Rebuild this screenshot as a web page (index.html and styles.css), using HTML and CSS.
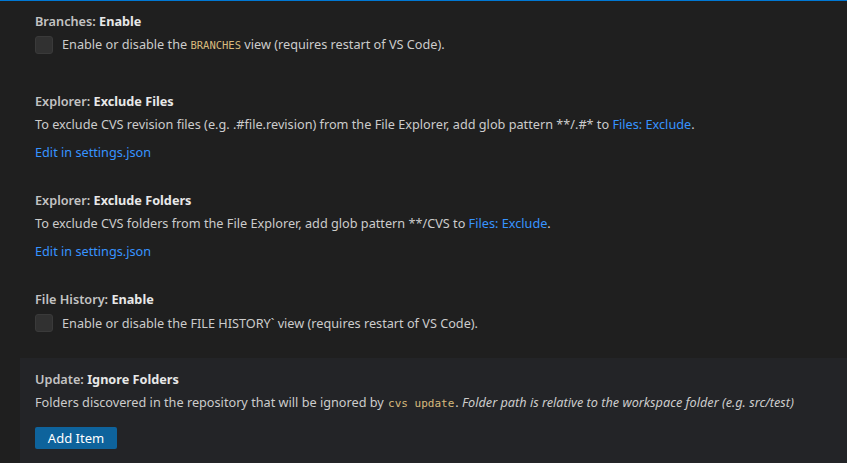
FILE: index.html
```html
<!DOCTYPE html>
<html>
<head>
<meta charset="utf-8">
<link rel="stylesheet" href="styles.css">
</head>
<body>
<div class="topline"></div>
<div class="list">
  <div class="item bool">
    <div class="title"><span class="cat">Branches: </span><span class="label">Enable</span></div>
    <div class="boolrow">
      <span class="checkbox"></span>
      <span class="desc">Enable or disable the <code class="kw">BRANCHES</code> view (requires restart of VS Code).</span>
    </div>
  </div>
  <div class="item link">
    <div class="title"><span class="cat">Explorer: </span><span class="label">Exclude Files</span></div>
    <div class="desc">To exclude CVS revision files (e.g. .#file.revision) from the File Explorer, add glob pattern **/.#* to <a class="a">Files: Exclude</a>.</div>
    <div class="edit"><a class="a">Edit in settings.json</a></div>
  </div>
  <div class="item link">
    <div class="title"><span class="cat">Explorer: </span><span class="label">Exclude Folders</span></div>
    <div class="desc">To exclude CVS folders from the File Explorer, add glob pattern **/CVS to <a class="a">Files: Exclude</a>.</div>
    <div class="edit"><a class="a">Edit in settings.json</a></div>
  </div>
  <div class="item bool">
    <div class="title"><span class="cat">File History: </span><span class="label">Enable</span></div>
    <div class="boolrow">
      <span class="checkbox"></span>
      <span class="desc">Enable or disable the FILE HISTORY` view (requires restart of VS Code).</span>
    </div>
  </div>
  <div class="item focused">
    <div class="title"><span class="cat">Update: </span><span class="label">Ignore Folders</span></div>
    <div class="desc">Folders discovered in the repository that will be ignored by <code class="code">cvs update</code>. <em>Folder path is relative to the workspace folder (e.g. src/test)</em></div>
    <button class="btn">Add Item</button>
  </div>
</div>
</body>
</html>
```
FILE: styles.css
```css
html, body {
  margin: 0;
  padding: 0;
  background: #1f1f1f;
  height: 100%;
  overflow: hidden;
}
body {
  font-family: "Noto Sans", "Open Sans", sans-serif;
  font-size: 12.7px;
  color: #cccccc;
}
.topline {
  height: 1px;
  background: #0078d4;
}
.list {
  margin-left: 20px;
  margin-top: -1px;
}
.item {
  padding: 12px 15px 0 15px;
}
.item.bool { height: 68px; }
.item.link { height: 87px; }
.item.focused {
  background: #232427;
  height: 93px;
}
.title {
  line-height: 18px;
  height: 18px;
  color: #c3c3c3;
  font-weight: 600;
  white-space: nowrap;
}
.title .label {
  color: #e8e8e8;
  font-weight: 700;
}
.boolrow {
  display: flex;
  align-items: center;
  margin-top: 5px;
  height: 19px;
}
.checkbox {
  width: 18px;
  height: 18px;
  box-sizing: border-box;
  background: #313131;
  border: 1px solid #3a3a3a;
  border-radius: 3px;
  margin-right: 9px;
  flex: none;
}
.desc {
  line-height: 18px;
  color: #cccccc;
  white-space: nowrap;
}
.link .desc, .focused .desc { margin-top: 5px; }
.edit {
  margin-top: 10px;
  line-height: 18px;
}
.a {
  color: #3794ff;
  text-decoration: none;
  cursor: pointer;
}
.kw {
  font-family: "DejaVu Sans Mono", monospace;
  font-size: 10.5px;
  color: #d7ba7d;
}
.code {
  font-family: "DejaVu Sans Mono", monospace;
  font-size: 11px;
  color: #d7ba7d;
  padding: 0 1px;
}
em {
  font-style: italic;
}
.btn {
  display: block;
  margin-top: 14px;
  background: #0e639c;
  color: #ffffff;
  border: none;
  border-radius: 2px;
  font-family: "Noto Sans", "Open Sans", sans-serif;
  font-size: 13px;
  height: 22px;
  width: 82px;
  padding: 0;
  line-height: 22px;
}
```
